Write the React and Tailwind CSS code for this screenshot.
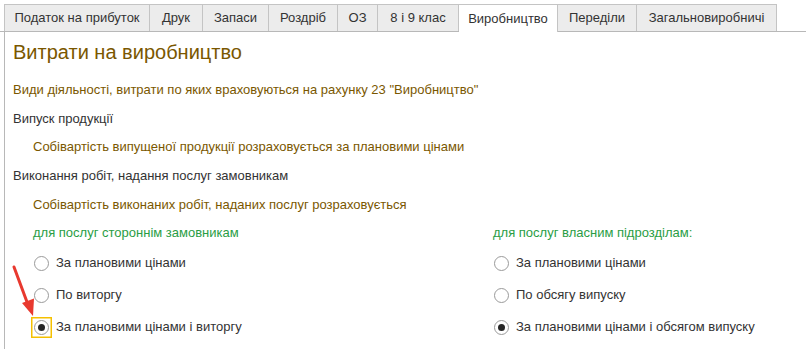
import React from "react";

const tabs = [
  { label: "Податок на прибуток", w: "w-[146px]" },
  { label: "Друк", w: "w-[53px]" },
  { label: "Запаси", w: "w-[66px]" },
  { label: "Роздріб", w: "w-[69px]" },
  { label: "ОЗ", w: "w-[40px]" },
  { label: "8 і 9 клас", w: "w-[81px]" },
  { label: "Виробництво", w: "w-[99px]", active: true },
  { label: "Переділи", w: "w-[79px]" },
  { label: "Загальновиробничі", w: "w-[140px]" },
];

function Radio({ label, checked, focused }) {
  return (
    <div className="h-[32px] flex items-center gap-[4px] -ml-[2px]">
      <span className="relative w-[21px] h-[21px] flex items-center justify-center">
        {focused && (
          <svg className="absolute inset-0" width="21" height="21">
            <rect x="0.75" y="0.75" width="19.5" height="19.5" fill="none" stroke="#f5c000" strokeWidth="1.5" />
          </svg>
        )}
        <span className="w-[15px] h-[15px] rounded-full border border-[#9a9a9a] bg-white flex items-center justify-center">
          {checked && <span className="w-[7px] h-[7px] rounded-full bg-[#262626]" />}
        </span>
      </span>
      <span className="text-[#333]">{label}</span>
    </div>
  );
}

export default function App() {
  return (
    <div className="relative w-[806px] h-[349px] overflow-hidden bg-white font-['Liberation_Sans',Arial,sans-serif] text-[13px] leading-[16px]">
      {/* вкладки */}
      <div className="flex pt-[4px] pl-[4px] border-b border-[#b8b8b8] h-[32px]">
        {tabs.map((t, i) => (
          <div
            key={t.label}
            className={`${t.w} flex items-center justify-center border-t border-r border-[#c4c4c4] text-[#333] ${
              i === 0 ? "border-l" : ""
            } ${
              t.active
                ? "bg-white h-[28px] -mb-px relative z-10"
                : "bg-[#ececec] h-[27px]"
            }`}
          >
            {t.label}
          </div>
        ))}
      </div>

      {/* вміст */}
      <div className="ml-[4px] border-l border-[#b8b8b8] h-[317px] pl-[8px]">
        <div className="h-[40px] flex items-center text-[20px] leading-[24px] text-[#7a5700]">
          Витрати на виробництво
        </div>
        <div className="mt-[3px]">
          <div className="h-[29px] flex items-center text-[#7a5700]">
            Види діяльності, витрати по яких враховуються на рахунку 23 "Виробництво"
          </div>
          <div className="h-[29px] flex items-center text-[#333]">Випуск продукції</div>
          <div className="h-[28px] flex items-center pl-[20px] text-[#7a5700]">
            Собівартість випущеної продукції розраховується за плановими цінами
          </div>
          <div className="h-[29px] flex items-center text-[#333]">
            Виконання робіт, надання послуг замовникам
          </div>
          <div className="h-[29px] flex items-center pl-[20px] text-[#7a5700]">
            Собівартість виконаних робіт, наданих послуг розраховується
          </div>
        </div>

        <div className="flex pl-[20px]">
          <div className="w-[460px]">
            <div className="h-[28px] flex items-center text-[#2a9d45]">
              для послуг стороннім замовникам
            </div>
            <Radio label="За плановими цінами" />
            <Radio label="По виторгу" />
            <Radio label="За плановими цінами і виторгу" checked focused />
          </div>
          <div>
            <div className="h-[28px] flex items-center text-[#2a9d45]">
              для послуг власним підрозділам:
            </div>
            <Radio label="За плановими цінами" />
            <Radio label="По обсягу випуску" />
            <Radio label="За плановими цінами і обсягом випуску" checked />
          </div>
        </div>
      </div>

      {/* стрілка */}
      <svg className="absolute left-0 top-0 pointer-events-none" width="806" height="349">
        <line x1="14" y1="267" x2="27" y2="302" stroke="#e8392f" strokeWidth="3" strokeLinecap="round" />
        <polygon points="33,316 22,303 34,298.5" fill="#e8392f" />
      </svg>
    </div>
  );
}
